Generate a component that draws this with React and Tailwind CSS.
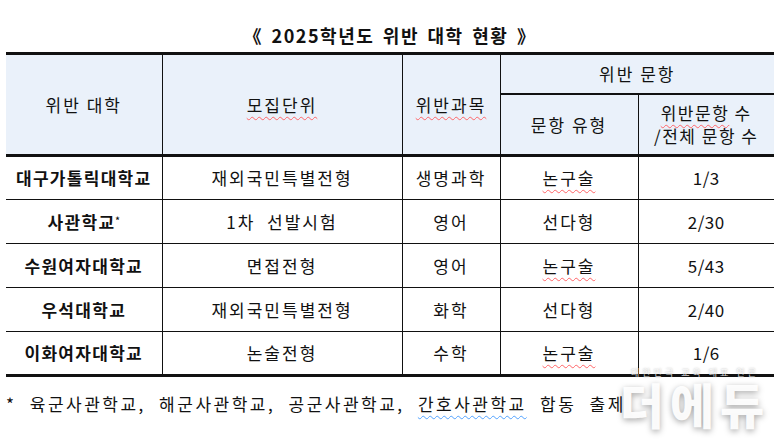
import React from 'react';

const rows = [
  { univ: '대구가톨릭대학교', unit: '재외국민특별전형', subject: '생명과학', type: '논구술', count: '1/3' },
  { univ: '사관학교', star: true, unit: '1차  선발시험', subject: '영어', type: '선다형', count: '2/30' },
  { univ: '수원여자대학교', unit: '면접전형', subject: '영어', type: '논구술', count: '5/43' },
  { univ: '우석대학교', unit: '재외국민특별전형', subject: '화학', type: '선다형', count: '2/40' },
  { univ: '이화여자대학교', unit: '논술전형', subject: '수학', type: '논구술', count: '1/6' },
];

const squiggle = 'underline decoration-wavy decoration-red-400 decoration-1 underline-offset-4';

const App = () => {
  return (
    <div
      className="relative w-[780px] h-[439px] bg-white overflow-hidden text-[#111]"
      style={{ fontFamily: '"Noto Sans CJK KR", "Noto Sans", sans-serif' }}
    >
      <div className="h-[52px] flex items-end justify-center pb-[8px]">
        <h1 className="text-[18px] font-bold tracking-[1.5px] [word-spacing:3px] leading-none">
          《 2025학년도 위반 대학 현황 》
        </h1>
      </div>

      <table className="ml-[6px] w-[768px] border-collapse table-fixed text-[17px] tracking-[2px] text-center">
        <colgroup>
          <col className="w-[156px]" />
          <col className="w-[240px]" />
          <col className="w-[98px]" />
          <col className="w-[138px]" />
          <col className="w-[136px]" />
        </colgroup>
        <thead className="bg-[#eaf1fa]">
          <tr className="h-[40px] border-t-[3px] border-[#111]">
            <th rowSpan={2} className="font-normal border-r border-[#111]">위반 대학</th>
            <th rowSpan={2} className="font-normal border-r border-[#111]">
              <span className={squiggle}>모집단위</span>
            </th>
            <th rowSpan={2} className="font-normal border-r border-[#111]">
              <span className={squiggle}>위반과목</span>
            </th>
            <th colSpan={2} className="font-normal border-b-2 border-[#111]">위반 문항</th>
          </tr>
          <tr className="h-[62px] border-b-[3px] border-[#111]">
            <th className="font-normal border-r border-[#111]">문항 유형</th>
            <th className="font-normal leading-[23px] tracking-[1.5px]">
              <span className={squiggle}>위반문항</span> 수<br />/전체 문항 수
            </th>
          </tr>
        </thead>
        <tbody>
          {rows.map((r, i) => (
            <tr
              key={r.univ}
              className={`h-[44px] ${i === rows.length - 1 ? 'border-b-[3px]' : 'border-b'} border-[#111]`}
            >
              <td className="font-bold tracking-[1.3px] border-r border-[#111]">
                {r.univ}
                {r.star && <sup className="text-[9px] tracking-normal">*</sup>}
              </td>
              <td className="border-r border-[#111] whitespace-pre">{r.unit}</td>
              <td className="border-r border-[#111]">{r.subject}</td>
              <td className="border-r border-[#111]">
                <span className={r.type === '논구술' ? squiggle : ''}>{r.type}</span>
              </td>
              <td className="tracking-[0.5px]">{r.count}</td>
            </tr>
          ))}
        </tbody>
      </table>

      <p className="mt-[18px] ml-[6px] text-[17px] leading-none tracking-[2.5px] [word-spacing:7px]">
        * 육군사관학교, 해군사관학교, 공군사관학교,{' '}
        <span className="underline decoration-wavy decoration-blue-400 decoration-1 underline-offset-4">간호사관학교</span>{' '}
        합동 출제
      </p>

      <div className="absolute left-[612px] top-[368px] w-[166px] flex flex-col items-center">
        <span className="text-[9px] leading-none text-white/80 tracking-[3px] [text-shadow:0_0_2px_rgba(0,0,0,0.35)]">
          대한민국 교육 대표 언론
        </span>
        <span className="text-[48px] font-black leading-none mt-[2px] text-white/95 tracking-[6px] [text-shadow:0_2px_6px_rgba(0,0,0,0.35)]">
          더에듀
        </span>
      </div>
    </div>
  );
};

export default App;
